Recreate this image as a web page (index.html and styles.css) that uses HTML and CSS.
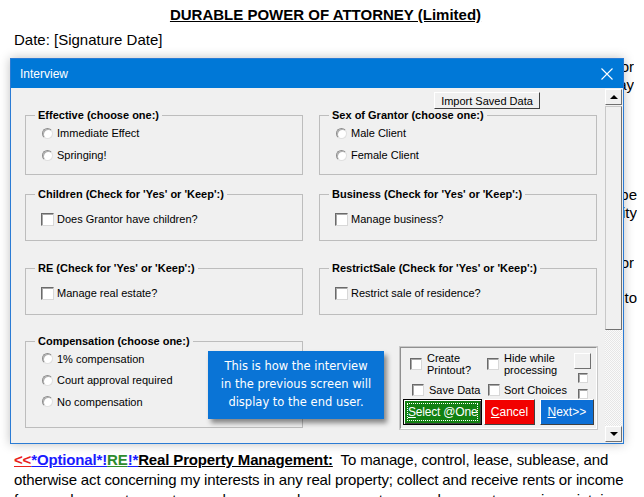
FILE: index.html
```html
<!DOCTYPE html>
<html lang="en">
<head>
    <meta charset="UTF-8">
    <title>Durable Power of Attorney - Interview</title>
    <link rel="stylesheet" href="styles.css">
</head>
<body>
    <!-- Documento por trás do formulário -->
    <div class="doc">
        <h1 class="doc-title">DURABLE POWER OF ATTORNEY (Limited)</h1>
        <p class="doc-date">Date: [Signature Date]</p>

        <div class="doc-hidden">
            <div class="doc-line l1">I, [Client Name], of [Client City], hereby appoint my agent to serve as my attorney-in-fact, to act for</div>
            <div class="doc-line l2">me and in my name, with respect to the powers listed below, in any lawful way</div>
            <div class="doc-line l3">This power of attorney shall become effective immediately upon my signature and shall not be</div>
            <div class="doc-line l4">affected by my subsequent disability, incompetence or incapacity</div>
            <div class="doc-line l5">If any agent named by me shall die, resign or become incapacitated, my successor agent shall serve in that office, whether or</div>
            <div class="doc-line l6">not the first agent has been removed, and shall have the powers granted below, including the right to</div>
        </div>

        <p class="doc-para">
            <span class="tag-red">&lt;&lt;</span><span class="tag-blue">*Optional*!</span><span class="tag-green">RE</span><span class="tag-blue">!*</span><span class="tag-head">Real Property Management:</span>&nbsp; To manage, control, lease, sublease, and otherwise act concerning my interests in any real property; collect and receive rents or income from such property; pay taxes, charges, and assessments on such property; repair, maintain, and improve it
        </p>
    </div>

    <!-- Janela de entrevista -->
    <div class="dialog">
        <div class="titlebar">
            <span class="titlebar-text">Interview</span>
            <svg class="titlebar-close" width="12" height="12" viewBox="0 0 12 12">
                <path d="M0.5 0.5 L11.5 11.5 M11.5 0.5 L0.5 11.5" stroke="#fff" stroke-width="1.1" fill="none"/>
            </svg>
        </div>

        <div class="dialog-body">
            <div class="form-area">
                <div class="import-row">
                    <button class="btn-import">Import Saved Data</button>
                </div>

                <div class="form-grid">
                    <fieldset class="group group-tall">
                        <legend>Effective (choose one:)</legend>
                        <div class="opt"><span class="radio"></span>Immediate Effect</div>
                        <div class="opt"><span class="radio"></span>Springing!</div>
                    </fieldset>
                    <fieldset class="group group-tall">
                        <legend>Sex of Grantor (choose one:)</legend>
                        <div class="opt"><span class="radio"></span>Male Client</div>
                        <div class="opt"><span class="radio"></span>Female Client</div>
                    </fieldset>

                    <fieldset class="group group-short row2">
                        <legend>Children (Check for 'Yes' or 'Keep':)</legend>
                        <div class="opt opt-check"><span class="check"></span>Does Grantor have children?</div>
                    </fieldset>
                    <fieldset class="group group-short row2">
                        <legend>Business (Check for 'Yes' or 'Keep':)</legend>
                        <div class="opt opt-check"><span class="check"></span>Manage business?</div>
                    </fieldset>

                    <fieldset class="group group-short row3">
                        <legend>RE (Check for 'Yes' or 'Keep':)</legend>
                        <div class="opt opt-check"><span class="check"></span>Manage real estate?</div>
                    </fieldset>
                    <fieldset class="group group-short row3">
                        <legend>RestrictSale (Check for 'Yes' or 'Keep':)</legend>
                        <div class="opt opt-check"><span class="check"></span>Restrict sale of residence?</div>
                    </fieldset>

                    <fieldset class="group group-comp">
                        <legend>Compensation (choose one:)</legend>
                        <div class="opt opt-comp"><span class="radio"></span>1% compensation</div>
                        <div class="opt opt-comp"><span class="radio"></span>Court approval required</div>
                        <div class="opt opt-comp"><span class="radio"></span>No compensation</div>
                    </fieldset>

                    <div class="action-panel">
                        <div class="action-grid">
                            <div class="act act-two"><span class="check"></span><span>Create<br>Printout?</span></div>
                            <div class="act act-two act-b"><span class="check"></span><span>Hide while<br>processing</span></div>
                            <div class="act-side">
                                <span class="mini-btn"></span>
                                <span class="check mini"></span>
                            </div>
                            <div class="act act-one"><span class="check"></span>Save Data</div>
                            <div class="act act-one act-b"><span class="check"></span>Sort Choices</div>
                            <div class="act-side act-side-low"><span class="check mini"></span></div>
                        </div>
                        <div class="action-buttons">
                            <button class="btn btn-select"><span class="focus"><u>S</u>elect @One</span></button>
                            <button class="btn btn-cancel"><u>C</u>ancel</button>
                            <button class="btn btn-next"><u>N</u>ext&gt;&gt;</button>
                        </div>
                    </div>
                </div>

                <div class="tooltip">This is how the interview<br>in the previous screen will<br>display to the end user.</div>
            </div>

            <div class="scrollbar">
                <span class="sb-arrow sb-up"></span>
                <span class="sb-thumb"></span>
                <span class="sb-track"></span>
                <span class="sb-arrow sb-down"></span>
            </div>
        </div>
    </div>
</body>
</html>
```

FILE: styles.css
```css
* {
    margin: 0;
    padding: 0;
    box-sizing: border-box;
}

body {
    background: #fff;
    font-family: "Liberation Sans", Arial, sans-serif;
    color: #000;
    width: 644px;
    height: 497px;
    overflow: hidden;
    position: relative;
}

/* Documento */
.doc {
    padding: 6px 7px 0 14px;
    font-size: 15px;
}

.doc-title {
    font-size: 15px;
    font-weight: bold;
    text-align: center;
    text-decoration: underline;
    line-height: 18px;
}

.doc-date {
    margin-top: 7px;
    line-height: 18px;
}

/* Linhas cobertas pela janela, só as pontas aparecem à direita */
.doc-hidden {
    height: 401px;
    padding-top: 9px;
}

.doc-line {
    white-space: nowrap;
    overflow: hidden;
    direction: rtl;
    text-align: right;
    line-height: 18px;
}

.doc-line.l1,
.doc-line.l2,
.doc-line.l5 { margin-right: 3px; }

.doc-line.l3 { margin-top: 92px; }
.doc-line.l5 { margin-top: 32px; }
.doc-line.l6 { margin-top: 17px; }

.doc-para {
    line-height: 20px;
    letter-spacing: -0.15px;
}

.tag-red,
.tag-blue,
.tag-green,
.tag-head {
    font-weight: bold;
    text-decoration: underline;
}

.tag-red { color: #e8201c; }
.tag-blue { color: #1a1aff; }
.tag-green { color: #2e8b2e; }

/* Janela */
.dialog {
    position: absolute;
    left: 10px;
    top: 58px;
    width: 614px;
    height: 386px;
    background: #f0f0f0;
    border: 1px solid #2a7bd4;
    box-shadow: 0 0 10px rgba(0, 0, 0, 0.25);
    display: flex;
    flex-direction: column;
    font-family: "Liberation Sans", Tahoma, sans-serif;
    font-size: 11px;
}

.titlebar {
    height: 29px;
    background: #0078d7;
    color: #fff;
    display: flex;
    align-items: center;
    justify-content: space-between;
    padding: 0 10px 0 9px;
    flex-shrink: 0;
}

.titlebar-text {
    font-size: 12px;
}

.dialog-body {
    flex: 1;
    display: flex;
    min-height: 0;
}

.form-area {
    flex: 1;
    padding: 4px 0 0 14px;
    position: relative;
}

.import-row {
    padding-left: 409px;
    height: 16px;
}

.btn-import {
    font-family: inherit;
    font-size: 11px;
    width: 106px;
    height: 17px;
    background: #f0f0f0;
    border: 1px solid;
    border-color: #fff #404040 #404040 #fff;
    color: #000;
}

.form-grid {
    display: grid;
    grid-template-columns: 278px 278px;
    column-gap: 16px;
    align-items: start;
}

.group {
    border: 1px solid #bdbdbd;
    padding: 0 0 0 15px;
    margin: 0;
    min-width: 0;
}

.group legend {
    font-weight: bold;
    font-size: 11px;
    line-height: 14px;
    padding: 0 3px;
    margin-left: -6px;
    color: #000;
}

.group-tall { height: 67px; }
.group-short { height: 54px; }
.row2 { margin-top: 12px; }
.row3 { margin-top: 20px; }
.group-comp { height: 94px; margin-top: 19px; }

.opt {
    display: flex;
    align-items: center;
    gap: 4px;
    height: 22px;
    padding-left: 1px;
}

.opt-check {
    margin-top: 7px;
    padding-left: 0;
    gap: 3px;
}

.opt-comp {
    height: 21.5px;
}

.radio {
    width: 11px;
    height: 11px;
    border-radius: 50%;
    background: #fff;
    border: 1px solid;
    border-color: #8c8c8c #e0e0e0 #e0e0e0 #8c8c8c;
    box-shadow: inset 1px 1px 0 #b0b0b0;
    flex-shrink: 0;
}

.check {
    width: 13px;
    height: 13px;
    background: #fff;
    border: 1px solid;
    border-color: #6a6a6a #d8d8d8 #d8d8d8 #6a6a6a;
    box-shadow: inset 1px 1px 0 #a8a8a8;
    flex-shrink: 0;
}

/* Painel de ações */
.action-panel {
    margin: 32px 0 0 81px;
    width: 197px;
    height: 82px;
    border: 1px solid;
    border-color: #909090 #ffffff #ffffff #909090;
    outline: 1px solid #c8c8c8;
    padding: 1px 2px 0 2px;
}

.action-grid {
    display: grid;
    grid-template-columns: 84px 86px 1fr;
    grid-template-rows: 30px 20px;
}

.act {
    display: flex;
    align-items: center;
    gap: 5px;
    line-height: 12px;
}

.act .check {
    width: 12px;
    height: 12px;
}

.act-two {
    padding: 0 0 0 7px;
}

.act-two.act-b { padding-left: 0; }

.act-one {
    padding: 2px 0 0 9px;
}

.act-one.act-b {
    padding-left: 1px;
    gap: 4px;
}

.act-side {
    display: flex;
    flex-direction: column;
    align-items: flex-start;
    padding: 4px 0 0 1px;
    gap: 4px;
}

.act-side-low {
    padding: 10px 0 0 5px;
}

.mini-btn {
    width: 17px;
    height: 16px;
    background: #f0f0f0;
    border: 1px solid;
    border-color: #fff #707070 #707070 #fff;
    flex-shrink: 0;
}

.check.mini {
    width: 10px;
    height: 10px;
    margin-left: 4px;
}

.act-side-low .check.mini { margin-left: 0; }

.action-buttons {
    display: flex;
    gap: 2px;
}

.btn {
    font-family: inherit;
    font-size: 12px;
    height: 26px;
    color: #fff;
    border: 1px solid;
    border-color: #fff #404040 #404040 #fff;
    white-space: nowrap;
}

.btn-select {
    width: 80px;
    background: #118011;
    border: 1px solid #000;
    box-shadow: inset 1px 1px 0 #fff, inset -1px -1px 0 #404040;
    padding: 3px;
}

.btn-select .focus {
    display: block;
    height: 100%;
    border: 1px dotted #fff;
    line-height: 16px;
    letter-spacing: -0.2px;
}

.btn-cancel {
    width: 51px;
    background: #f20000;
}

.btn-next {
    width: 55px;
    margin-left: 3px;
    background: #0c6fd6;
}

/* Balão explicativo */
.tooltip {
    position: absolute;
    left: 197px;
    top: 263px;
    width: 176px;
    height: 68px;
    background: #0a74d6;
    color: #fff;
    font-family: "DejaVu Sans", Verdana, sans-serif;
    font-size: 11.5px;
    line-height: 18px;
    text-align: center;
    padding: 6px 0 0;
    box-shadow: 3px 4px 5px rgba(0, 0, 0, 0.45);
}

/* Barra de rolagem */
.scrollbar {
    width: 17px;
    margin-right: 1px;
    display: flex;
    flex-direction: column;
    padding-top: 1px;
    padding-bottom: 1px;
}

.sb-arrow {
    height: 16px;
    background: #f0f0f0;
    border: 1px solid;
    border-color: #fff #707070 #707070 #fff;
    position: relative;
    flex-shrink: 0;
}

.sb-arrow::after {
    content: "";
    position: absolute;
    left: 4px;
    border-left: 4px solid transparent;
    border-right: 4px solid transparent;
}

.sb-up::after {
    top: 5px;
    border-bottom: 4px solid #000;
}

.sb-down::after {
    top: 5px;
    border-top: 4px solid #000;
}

.sb-thumb {
    height: 224px;
    background: #f0f0f0;
    border: 1px solid;
    border-color: #c8c8c8 #707070 #707070 #c8c8c8;
    margin-top: 1px;
    flex-shrink: 0;
}

.sb-track {
    flex: 1;
    background-color: #fafafa;
    background-image: repeating-conic-gradient(#e6e6e6 0 25%, #fafafa 0 50%);
    background-size: 2px 2px;
}
```
